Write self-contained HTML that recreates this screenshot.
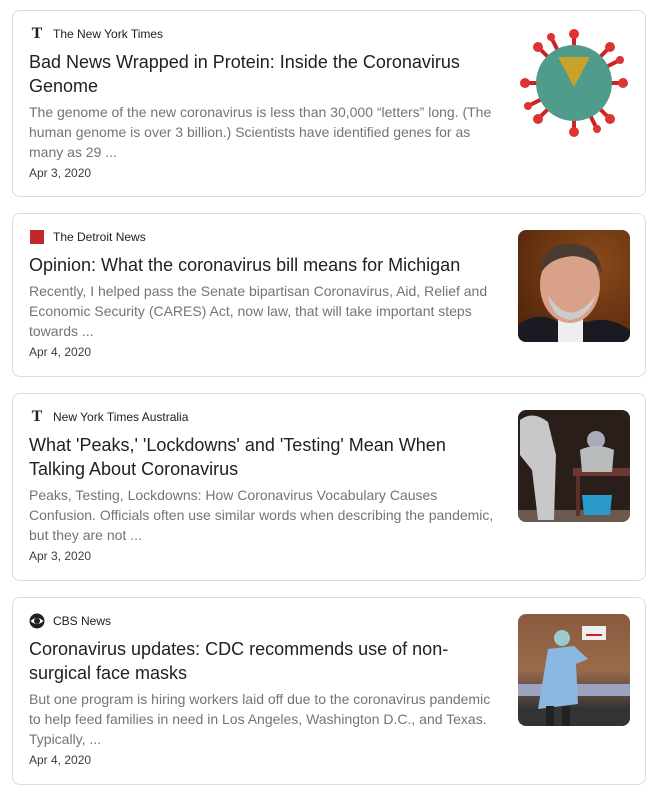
<!DOCTYPE html>
<html><head><meta charset="utf-8"><style>
body{margin:0;background:#fff;font-family:"Liberation Sans",Arial,sans-serif;width:655px;height:801px;overflow:hidden}
.card{position:absolute;left:12px;width:634px;border:1px solid #dadce0;border-radius:8px;box-sizing:border-box;padding:15px 16px 15px 16px}
.src{height:16px;line-height:16px;font-size:12px;color:#202124;display:flex;align-items:center}
.ic{width:16px;height:16px;margin-right:8px;display:inline-flex;align-items:center;justify-content:center}
.t{margin-top:8px;font-size:18px;line-height:24px;color:#202124;width:450px}
.s{margin-top:4px;font-size:14px;line-height:20px;color:#70757a;width:470px}
.d{margin-top:3px;font-size:12px;line-height:16px;color:#3c4043}
.img{position:absolute;right:15px;top:16px;width:112px;height:112px;border-radius:8px;overflow:hidden}
</style></head><body>

<div class="card" style="top:10px;height:187px">
<div class="src"><span class="ic" style="font-family:'Liberation Serif',serif;font-weight:bold;font-size:16px">T</span>The New York Times</div>
<div class="t">Bad News Wrapped in Protein: Inside the Coronavirus Genome</div>
<div class="s">The genome of the new coronavirus is less than 30,000 “letters” long. (The human genome is over 3 billion.) Scientists have identified genes for as many as 29 ...</div>
<div class="d">Apr 3, 2020</div>
<div class="img" style="border-radius:0">
<svg width="112" height="112" viewBox="0 0 112 112">
<g stroke="#c22" stroke-width="4" fill="#d33">
<line x1="56" y1="56" x2="56" y2="6"/><line x1="56" y1="56" x2="56" y2="106"/><line x1="56" y1="56" x2="6" y2="56"/><line x1="56" y1="56" x2="106" y2="56"/>
<line x1="56" y1="56" x2="20" y2="20"/><line x1="56" y1="56" x2="92" y2="20"/><line x1="56" y1="56" x2="20" y2="92"/><line x1="56" y1="56" x2="92" y2="92"/>
<line x1="56" y1="56" x2="33" y2="10"/><line x1="56" y1="56" x2="79" y2="102"/><line x1="56" y1="56" x2="102" y2="33"/><line x1="56" y1="56" x2="10" y2="79"/>
</g>
<circle cx="56" cy="56" r="38" fill="#4f9c8c"/>
<path d="M40 30 L72 30 L56 60Z" fill="#c9a227"/>
<g fill="#d33"><circle cx="56" cy="7" r="5"/><circle cx="56" cy="105" r="5"/><circle cx="7" cy="56" r="5"/><circle cx="105" cy="56" r="5"/><circle cx="20" cy="20" r="5"/><circle cx="92" cy="20" r="5"/><circle cx="20" cy="92" r="5"/><circle cx="92" cy="92" r="5"/><circle cx="33" cy="10" r="4"/><circle cx="79" cy="102" r="4"/><circle cx="102" cy="33" r="4"/><circle cx="10" cy="79" r="4"/></g>
</svg></div>
</div>

<div class="card" style="top:213px;height:164px">
<div class="src"><span class="ic"><span style="width:14px;height:14px;background:#c1272d;display:block"></span></span>The Detroit News</div>
<div class="t">Opinion: What the coronavirus bill means for Michigan</div>
<div class="s">Recently, I helped pass the Senate bipartisan Coronavirus, Aid, Relief and Economic Security (CARES) Act, now law, that will take important steps towards ...</div>
<div class="d">Apr 4, 2020</div>
<div class="img" style="background:radial-gradient(circle at 70% 30%,#8a4a1a,#4a200a)">
<svg width="112" height="112"><path d="M0 112 L0 95 Q20 80 40 92 L70 92 Q90 85 112 100 L112 112Z" fill="#1a1a22"/><rect x="40" y="85" width="25" height="27" fill="#eee"/><ellipse cx="52" cy="55" rx="30" ry="38" fill="#d9a08a"/><path d="M22 45 Q25 12 55 14 Q82 15 84 45 Q78 28 55 26 Q30 28 22 45Z" fill="#4a3a30"/><path d="M30 65 Q52 100 78 65 Q70 88 52 90 Q34 88 30 65Z" fill="#ccc"/></svg>
</div>
</div>

<div class="card" style="top:393px;height:188px">
<div class="src"><span class="ic" style="font-family:'Liberation Serif',serif;font-weight:bold;font-size:16px">T</span>New York Times Australia</div>
<div class="t">What 'Peaks,' 'Lockdowns' and 'Testing' Mean When Talking About Coronavirus</div>
<div class="s">Peaks, Testing, Lockdowns: How Coronavirus Vocabulary Causes Confusion. Officials often use similar words when describing the pandemic, but they are not ...</div>
<div class="d">Apr 3, 2020</div>
<div class="img" style="background:#2a1e1a">
<svg width="112" height="112"><rect x="0" y="100" width="112" height="12" fill="#6a5a50"/><path d="M2 10 Q15 0 30 12 L38 45 L36 110 L20 110 L14 60 L2 45Z" fill="#c8c8c8"/><rect x="55" y="58" width="57" height="8" fill="#6a3a30"/><rect x="58" y="66" width="4" height="40" fill="#5a3028"/><circle cx="78" cy="30" r="9" fill="#aab"/><path d="M62 40 Q78 32 96 40 L94 62 L64 62Z" fill="#b8bcbc"/><path d="M64 85 L94 85 L92 105 L66 105Z" fill="#2a9ac8"/></svg>
</div>
</div>

<div class="card" style="top:597px;height:188px">
<div class="src"><span class="ic"><svg width="16" height="16" viewBox="0 0 16 16"><circle cx="8" cy="8" r="7.5" fill="#202124"/><path d="M1.5 8 Q8 2 14.5 8 Q8 14 1.5 8Z" fill="#fff"/><circle cx="8" cy="8" r="3" fill="#202124"/></svg></span>CBS News</div>
<div class="t">Coronavirus updates: CDC recommends use of non-surgical face masks</div>
<div class="s">But one program is hiring workers laid off due to the coronavirus pandemic to help feed families in need in Los Angeles, Washington D.C., and Texas. Typically, ...</div>
<div class="d">Apr 4, 2020</div>
<div class="img" style="background:linear-gradient(#8a5a40 0%,#9a6a4a 50%,#7a5a48 60%,#333 85%)">
<svg width="112" height="112"><rect x="64" y="12" width="24" height="14" fill="#eee"/><rect x="68" y="20" width="16" height="2" fill="#c22"/><rect x="0" y="70" width="112" height="12" fill="#9aa4c0"/><circle cx="44" cy="24" r="8" fill="#9cc"/><path d="M30 35 L56 32 L70 45 L58 50 L60 90 L20 95 Z" fill="#8ab8e0"/><rect x="28" y="92" width="8" height="20" fill="#222"/><rect x="44" y="92" width="8" height="20" fill="#222"/></svg>
</div>
</div>

</body></html>
